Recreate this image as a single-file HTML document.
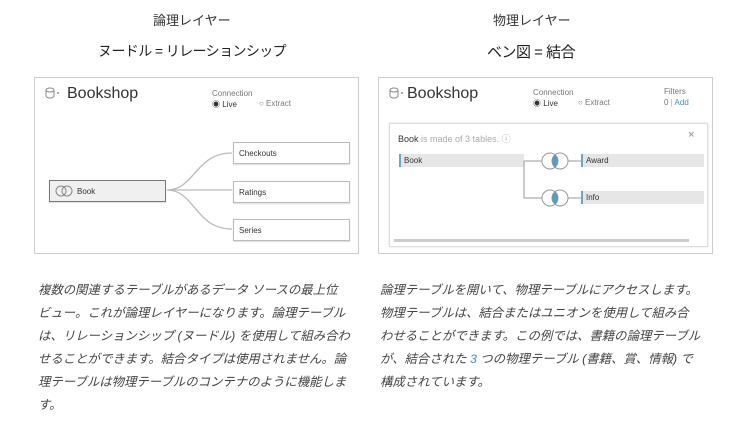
<!DOCTYPE html>
<html><head><meta charset="utf-8"><style>
body{margin:0;width:750px;height:445px;background:#fff;position:relative;overflow:hidden;font-family:"Liberation Sans","Noto Sans CJK JP",sans-serif;color:#333}
.a{position:absolute;white-space:nowrap}
.t1{font-size:13px;color:#333}
.t2{font-size:14px;color:#222}
.p{position:absolute;font-size:12.4px;line-height:23px;font-style:italic;color:#444;white-space:nowrap}
.panel{position:absolute;border:1px solid #ccc;background:#fff}
.bk{font-size:16px;color:#333}
.sm{font-size:8px;color:#777}
.box{position:absolute;border:1px solid #bbb;background:#fff;font-size:8px;color:#333;box-shadow:0 1px 1px #ddd}
.row{position:absolute;background:#e6e6e6;border-left:2px solid #6aa6c8;font-size:8px;color:#333;height:13px;line-height:13px;padding-left:3px}
</style></head><body>
<div class="a t1" style="left:153px;top:10px">論理レイヤー</div>
<div class="a t1" style="left:493px;top:10px">物理レイヤー</div>
<div class="a t2" style="left:98px;top:41px;letter-spacing:-0.6px">ヌードル = リレーションシップ</div>
<div class="a t2" style="left:487px;top:41px;font-size:15px;letter-spacing:-0.5px">ベン図 = 結合</div>

<div class="panel" style="left:34px;top:77px;width:323px;height:175px">
 <svg style="position:absolute;left:10px;top:8px" width="20" height="14"><ellipse cx="5" cy="4" rx="4" ry="2" fill="none" stroke="#888"/><path d="M1 4v6a4 2 0 0 0 8 0V4" fill="none" stroke="#888"/><circle cx="13" cy="7" r="1" fill="#888"/></svg>
 <div class="a bk" style="left:32px;top:7px">Bookshop</div>
 <div class="a sm" style="left:177px;top:11px">Connection</div>
 <div class="a sm" style="left:177px;top:21px;color:#333">◉ Live</div>
 <div class="a sm" style="left:224px;top:21px">○ Extract</div>
 <svg style="position:absolute;left:0;top:0" width="323" height="175"><path d="M132 112 C160 112,160 75,197 75 M132 112 L197 112 M132 112 C160 112,160 151,197 151" fill="none" stroke="#bbb" stroke-width="1.3"/></svg>
 <div class="box" style="left:14px;top:102px;width:115px;height:20px;border:1px solid #777;background:#f0f0f0"><svg style="position:absolute;left:5px;top:4px" width="20" height="12"><circle cx="6" cy="6" r="5" fill="none" stroke="#888"/><circle cx="12" cy="6" r="5" fill="none" stroke="#888"/></svg><span class="a" style="left:27px;top:6px">Book</span></div>
 <div class="box" style="left:198px;top:64px;width:115px;height:20px"><span class="a" style="left:5px;top:6px">Checkouts</span></div>
 <div class="box" style="left:198px;top:103px;width:115px;height:20px"><span class="a" style="left:5px;top:6px">Ratings</span></div>
 <div class="box" style="left:198px;top:141px;width:115px;height:20px"><span class="a" style="left:5px;top:6px">Series</span></div>
</div>

<div class="panel" style="left:378px;top:77px;width:333px;height:175px">
 <svg style="position:absolute;left:10px;top:8px" width="20" height="14"><ellipse cx="5" cy="4" rx="4" ry="2" fill="none" stroke="#888"/><path d="M1 4v6a4 2 0 0 0 8 0V4" fill="none" stroke="#888"/><circle cx="13" cy="7" r="1" fill="#888"/></svg>
 <div class="a bk" style="left:28px;top:7px">Bookshop</div>
 <div class="a sm" style="left:154px;top:10px">Connection</div>
 <div class="a sm" style="left:154px;top:20px;color:#333">◉ Live</div>
 <div class="a sm" style="left:199px;top:20px">○ Extract</div>
 <div class="a sm" style="left:285px;top:9px">Filters</div>
 <div class="a sm" style="left:285px;top:20px">0 <span style="color:#aac">|</span> <span style="color:#4a8cc0">Add</span></div>
 <div style="position:absolute;left:10px;top:45px;width:317px;height:122px;border:1px solid #ddd;box-shadow:0 0 2px #ddd">
  <div class="a" style="left:8px;top:8px;font-size:9px;color:#333"><b style="font-weight:normal">Book</b> <span style="color:#aaa">is made of 3 tables. ⓘ</span></div>
  <div class="a" style="left:298px;top:5px;font-size:11px;color:#888">×</div>
  <div class="row" style="left:9px;top:30px;width:120px">Book</div>
  <div class="row" style="left:191px;top:30px;width:118px">Award</div>
  <div class="row" style="left:191px;top:67px;width:118px">Info</div>
  <svg style="position:absolute;left:0;top:0" width="317" height="122"><path d="M134 37H152M134 37V74H152M178 37H191M178 74H191" stroke="#999" fill="none"/>
  <g fill="none" stroke="#999"><circle cx="160" cy="37" r="8"/><circle cx="170" cy="37" r="8"/><circle cx="160" cy="74" r="8"/><circle cx="170" cy="74" r="8"/></g>
  <path d="M165 30.8A8 8 0 0 1 165 43.2A8 8 0 0 1 165 30.8Z M165 67.8A8 8 0 0 1 165 80.2A8 8 0 0 1 165 67.8Z" fill="#5a9cc0"/>
  <rect x="4" y="115" width="295" height="3" fill="#ccc"/></svg>
 </div>
</div>

<div class="p" style="left:38px;top:279px">複数の関連するテーブルがあるデータ ソースの最上位<br>ビュー。これが論理レイヤーになります。論理テーブル<br>は、リレーションシップ (ヌードル) を使用して組み合わ<br>せることができます。結合タイプは使用されません。論<br>理テーブルは物理テーブルのコンテナのように機能しま<br>す。</div>
<div class="p" style="left:380px;top:279px">論理テーブルを開いて、物理テーブルにアクセスします。<br>物理テーブルは、結合またはユニオンを使用して組み合<br>わせることができます。この例では、書籍の論理テーブル<br>が、結合された <span style="color:#4a8cc0">3</span> つの物理テーブル (書籍、賞、情報) で<br>構成されています。</div>
</body></html>
